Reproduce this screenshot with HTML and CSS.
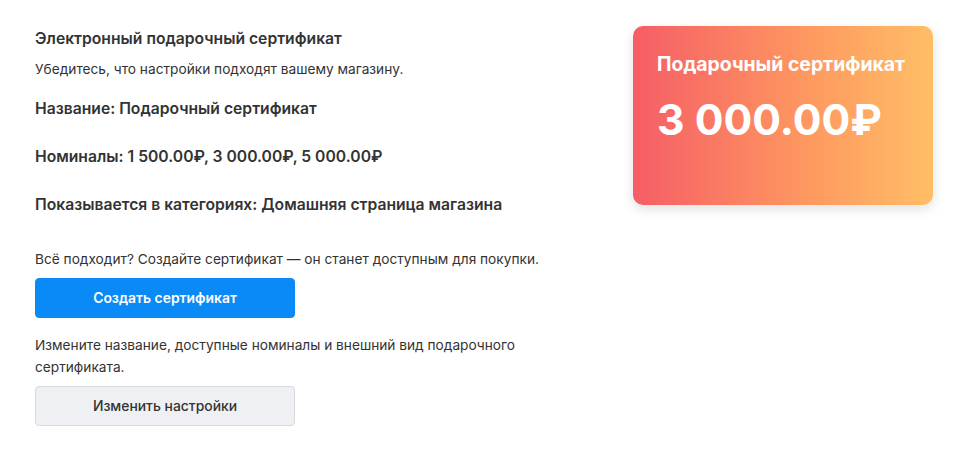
FILE: index.html
```html
<!DOCTYPE html>
<html lang="ru">
<head>
<meta charset="utf-8">
<link rel="stylesheet" href="styles.css">
</head>
<body>
<div class="page">
  <div class="info">
    <h2 class="title">Электронный подарочный сертификат</h2>
    <p class="lead">Убедитесь, что настройки подходят вашему магазину.</p>
    <p class="field">Название: Подарочный сертификат</p>
    <p class="field">Номиналы: 1 500.00₽, 3 000.00₽, 5 000.00₽</p>
    <p class="field">Показывается в категориях: Домашняя страница магазина</p>
    <p class="note">Всё подходит? Создайте сертификат — он станет доступным для покупки.</p>
    <button class="btn btn-primary">Создать сертификат</button>
    <p class="note note-second">Измените название, доступные номиналы и внешний вид подарочного сертификата.</p>
    <button class="btn btn-secondary">Изменить настройки</button>
  </div>
  <div class="card">
    <div class="card-title">Подарочный сертификат</div>
    <div class="card-amount">3 000.00₽</div>
  </div>
</div>
</body>
</html>
```
FILE: styles.css
```css
* { box-sizing: border-box; }
html, body { margin: 0; padding: 0; background: #fff; }
body {
  font-family: Inter, "Noto Sans", sans-serif;
  color: #333;
}
.page {
  display: flex;
  align-items: flex-start;
  padding: 26px 0 0 35px;
  gap: 78px;
}
.info {
  width: 520px;
  display: flex;
  flex-direction: column;
  align-items: flex-start;
}
.title {
  margin: 2px 0 0;
  font-size: 15.7px;
  font-weight: 600;
  line-height: 22px;
}
.lead {
  margin: 9px 0 0;
  font-size: 13.7px;
  line-height: 20px;
}
.field {
  margin: 0;
  font-size: 15.7px;
  font-weight: 600;
  line-height: 22px;
}
.lead + .field { margin-top: 19px; }
.field + .field { margin-top: 26px; }
.note {
  margin: 32px 0 0;
  font-size: 13.7px;
  line-height: 22px;
}
.note-second { margin-top: 16px; }
.btn {
  width: 260px;
  height: 40px;
  border-radius: 4px;
  font-family: inherit;
  font-size: 13.9px;
  font-weight: 600;
  cursor: pointer;
}
.btn-primary {
  margin-top: 8px;
  background: #0a8af6;
  border: 1px solid #0a8af6;
  color: #fff;
}
.btn-secondary {
  margin-top: 8px;
  background: #eff0f3;
  border: 1px solid #d6d9de;
  color: #333;
  font-weight: 500;
}
.card {
  width: 300px;
  height: 179px;
  border-radius: 10px;
  background: linear-gradient(90deg, #f65d66 0%, #fe9a60 60%, #ffbe66 100%);
  box-shadow: 0 4px 12px rgba(0, 0, 0, 0.12);
  padding: 26px 24px;
  color: #fff;
}
.card-title {
  font-size: 19.4px;
  font-weight: 700;
  line-height: 24px;
}
.card-amount {
  margin-top: 20px;
  font-size: 42.7px;
  font-weight: 700;
  line-height: 48px;
}
```
